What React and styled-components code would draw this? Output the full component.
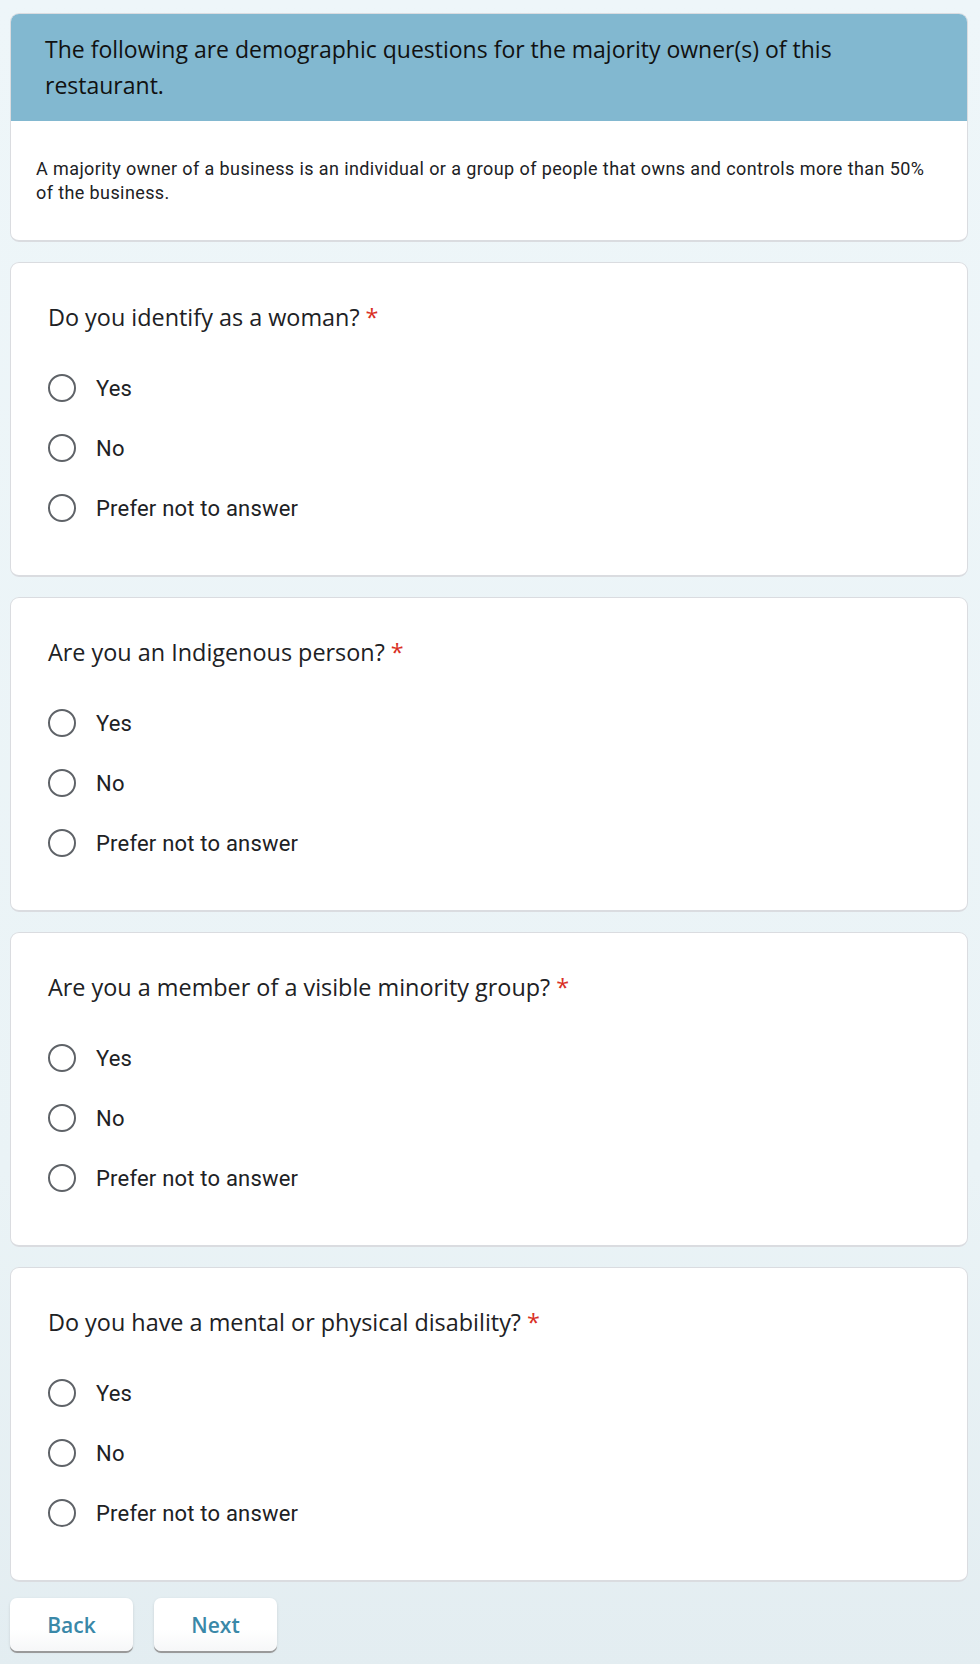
import React from "react";
import styled, { createGlobalStyle } from "styled-components";

const GlobalStyle = createGlobalStyle`
  html, body { margin: 0; padding: 0; }
  body {
    background: linear-gradient(180deg, #eef6f9 0%, #eaf3f6 70%, #e3edf1 100%);
    min-height: 100vh;
    font-family: Roboto, "Liberation Sans", Arial, sans-serif;
  }
`;

const Page = styled.div`
  width: 958px;
  padding: 13px 0 20px 10px;
  display: flex;
  flex-direction: column;
  gap: 20px;
`;

const Card = styled.div`
  background: #fff;
  border: 1px solid #dadce0;
  border-bottom-width: 2px;
  border-radius: 9px;
  overflow: hidden;
`;

const HeaderBand = styled.div`
  background: #82b8d0;
  padding: 18px 100px 18px 35px;
  margin: -1px -1px 0;
  font-family: "Open Sans", Roboto, sans-serif;
  font-size: 23px;
  line-height: 36px;
  color: #111;
`;

const Description = styled.div`
  padding: 36px 25px 35px 25px;
  font-size: 18px;
  line-height: 24px;
  letter-spacing: 0.4px;
  color: #202124;
`;

const QuestionCard = styled(Card)`
  padding: 36px 37px 37px;
`;

const QuestionTitle = styled.div`
  font-family: "Open Sans", Roboto, sans-serif;
  font-size: 23.4px;
  line-height: 36px;
  color: #202124;
  margin-bottom: 23px;
`;

const Required = styled.span`
  color: #d93025;
  margin-left: 6px;
`;

const Options = styled.div`
  display: flex;
  flex-direction: column;
`;

const Option = styled.label`
  display: flex;
  align-items: center;
  height: 60px;
  gap: 20px;
  font-size: 22px;
  color: #202124;
  letter-spacing: 0.2px;
  cursor: pointer;
`;

const Radio = styled.span`
  width: 28px;
  height: 28px;
  box-sizing: border-box;
  border: 2.5px solid #5f6368;
  border-radius: 50%;
  flex-shrink: 0;
`;

const ButtonRow = styled.div`
  display: flex;
  gap: 21px;
  margin-top: -4px;
`;

const NavButton = styled.button`
  width: 123px;
  height: 53px;
  border: none;
  border-radius: 7px;
  background: linear-gradient(180deg, #ffffff 0%, #ffffff 60%, #f6f7f8 100%);
  box-shadow: 0 2px 0 #9a9a9a, 0 1px 3px rgba(0, 0, 0, 0.12);
  color: #3a88a8;
  font-family: "Open Sans", Roboto, sans-serif;
  font-size: 21px;
  font-weight: 600;
  cursor: pointer;
`;

const questions = [
  "Do you identify as a woman?",
  "Are you an Indigenous person?",
  "Are you a member of a visible minority group?",
  "Do you have a mental or physical disability?",
];

const choices = ["Yes", "No", "Prefer not to answer"];

export default function App() {
  return (
    <>
      <GlobalStyle />
      <Page>
        <Card>
          <HeaderBand>
            The following are demographic questions for the majority owner(s) of this restaurant.
          </HeaderBand>
          <Description>
            A majority owner of a business is an individual or a group of people that owns and controls more than 50% of the business.
          </Description>
        </Card>
        {questions.map((q) => (
          <QuestionCard key={q}>
            <QuestionTitle>
              {q}
              <Required>*</Required>
            </QuestionTitle>
            <Options>
              {choices.map((c) => (
                <Option key={c}>
                  <Radio />
                  {c}
                </Option>
              ))}
            </Options>
          </QuestionCard>
        ))}
        <ButtonRow>
          <NavButton>Back</NavButton>
          <NavButton>Next</NavButton>
        </ButtonRow>
      </Page>
    </>
  );
}
